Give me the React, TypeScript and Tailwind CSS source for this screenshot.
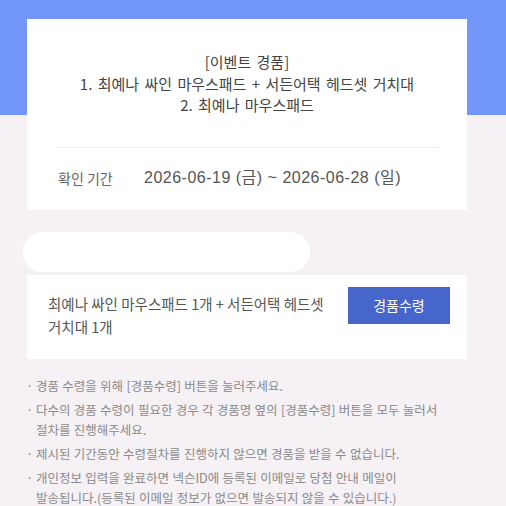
export default function App() {
  const font = { fontFamily: '"Noto Sans CJK KR", "Noto Sans", sans-serif' };
  const bullets: React.ReactNode[] = [
    "경품 수령을 위해 [경품수령] 버튼을 눌러주세요.",
    "다수의 경품 수령이 필요한 경우 각 경품명 옆의 [경품수령] 버튼을 모두 눌러서 절차를 진행해주세요.",
    "제시된 기간동안 수령절차를 진행하지 않으면 경품을 받을 수 없습니다.",
    <>
      개인정보 입력을 완료하면 넥슨ID에 등록된 이메일로 당첨 안내 메일이{" "}
      <span className="whitespace-nowrap">발송됩니다.(등록된</span> 이메일 정보가 없으면 발송되지 않을 수 있습니다.)
    </>,
  ];
  return (
    <div
      className="w-[506px] h-[506px] overflow-hidden bg-[linear-gradient(#7396fa_0_115px,#f5f1f5_115px)] pl-[27px] pr-[39px] pt-[19px]"
      style={font}
    >
      <div className="bg-white h-[191px] flex flex-col">
        <div className="pt-[32px] text-center text-[15px] leading-[21.5px] text-[#444] [word-spacing:2px]">
          <div>[이벤트 경품]</div>
          <div>1. 최예나 싸인 마우스패드 + 서든어택 헤드셋 거치대</div>
          <div>2. 최예나 마우스패드</div>
        </div>
        <div className="mx-[29px] mt-[31px] h-px bg-[#f0eef0]" />
        <div className="flex items-center mt-[20px] text-[14px] leading-[20px]">
          <span className="ml-[31px] w-[86px] text-[#666]">확인 기간</span>
          <span
            className="text-[#555] text-[16px] tracking-[0.5px]"
            style={{ fontFamily: '"Liberation Sans", "Noto Sans CJK KR", sans-serif' }}
          >
            2026-06-19 (금) ~ 2026-06-28 (일)
          </span>
        </div>
      </div>
      <div className="mt-[22px] -ml-[4px] w-[287px] h-[40px] bg-white rounded-[20px]" />
      <div className="mt-[3px] bg-white h-[84px] flex items-start pl-[21px] pr-[17px]">
        <div className="flex-1 pt-[17px] text-[14.5px] leading-[23px] text-[#555] pr-[10px] break-keep">
          최예나 싸인 마우스패드 1개 + 서든어택 헤드셋 거치대 1개
        </div>
        <div className="mt-[12px] w-[102px] h-[37px] bg-[#4666cc] text-white text-[14px] flex items-center justify-center">
          경품수령
        </div>
      </div>
      <ul className="mt-[17px] w-[428px] flex flex-col gap-[4px] text-[12.5px] leading-[20px] text-[#8a8a8a] break-keep [word-spacing:0.5px]">
        {bullets.map((b, i) => (
          <li key={i} className="flex">
            <span className="w-[10px] shrink-0 -ml-[1px]">·</span>
            <span>{b}</span>
          </li>
        ))}
      </ul>
    </div>
  );
}
